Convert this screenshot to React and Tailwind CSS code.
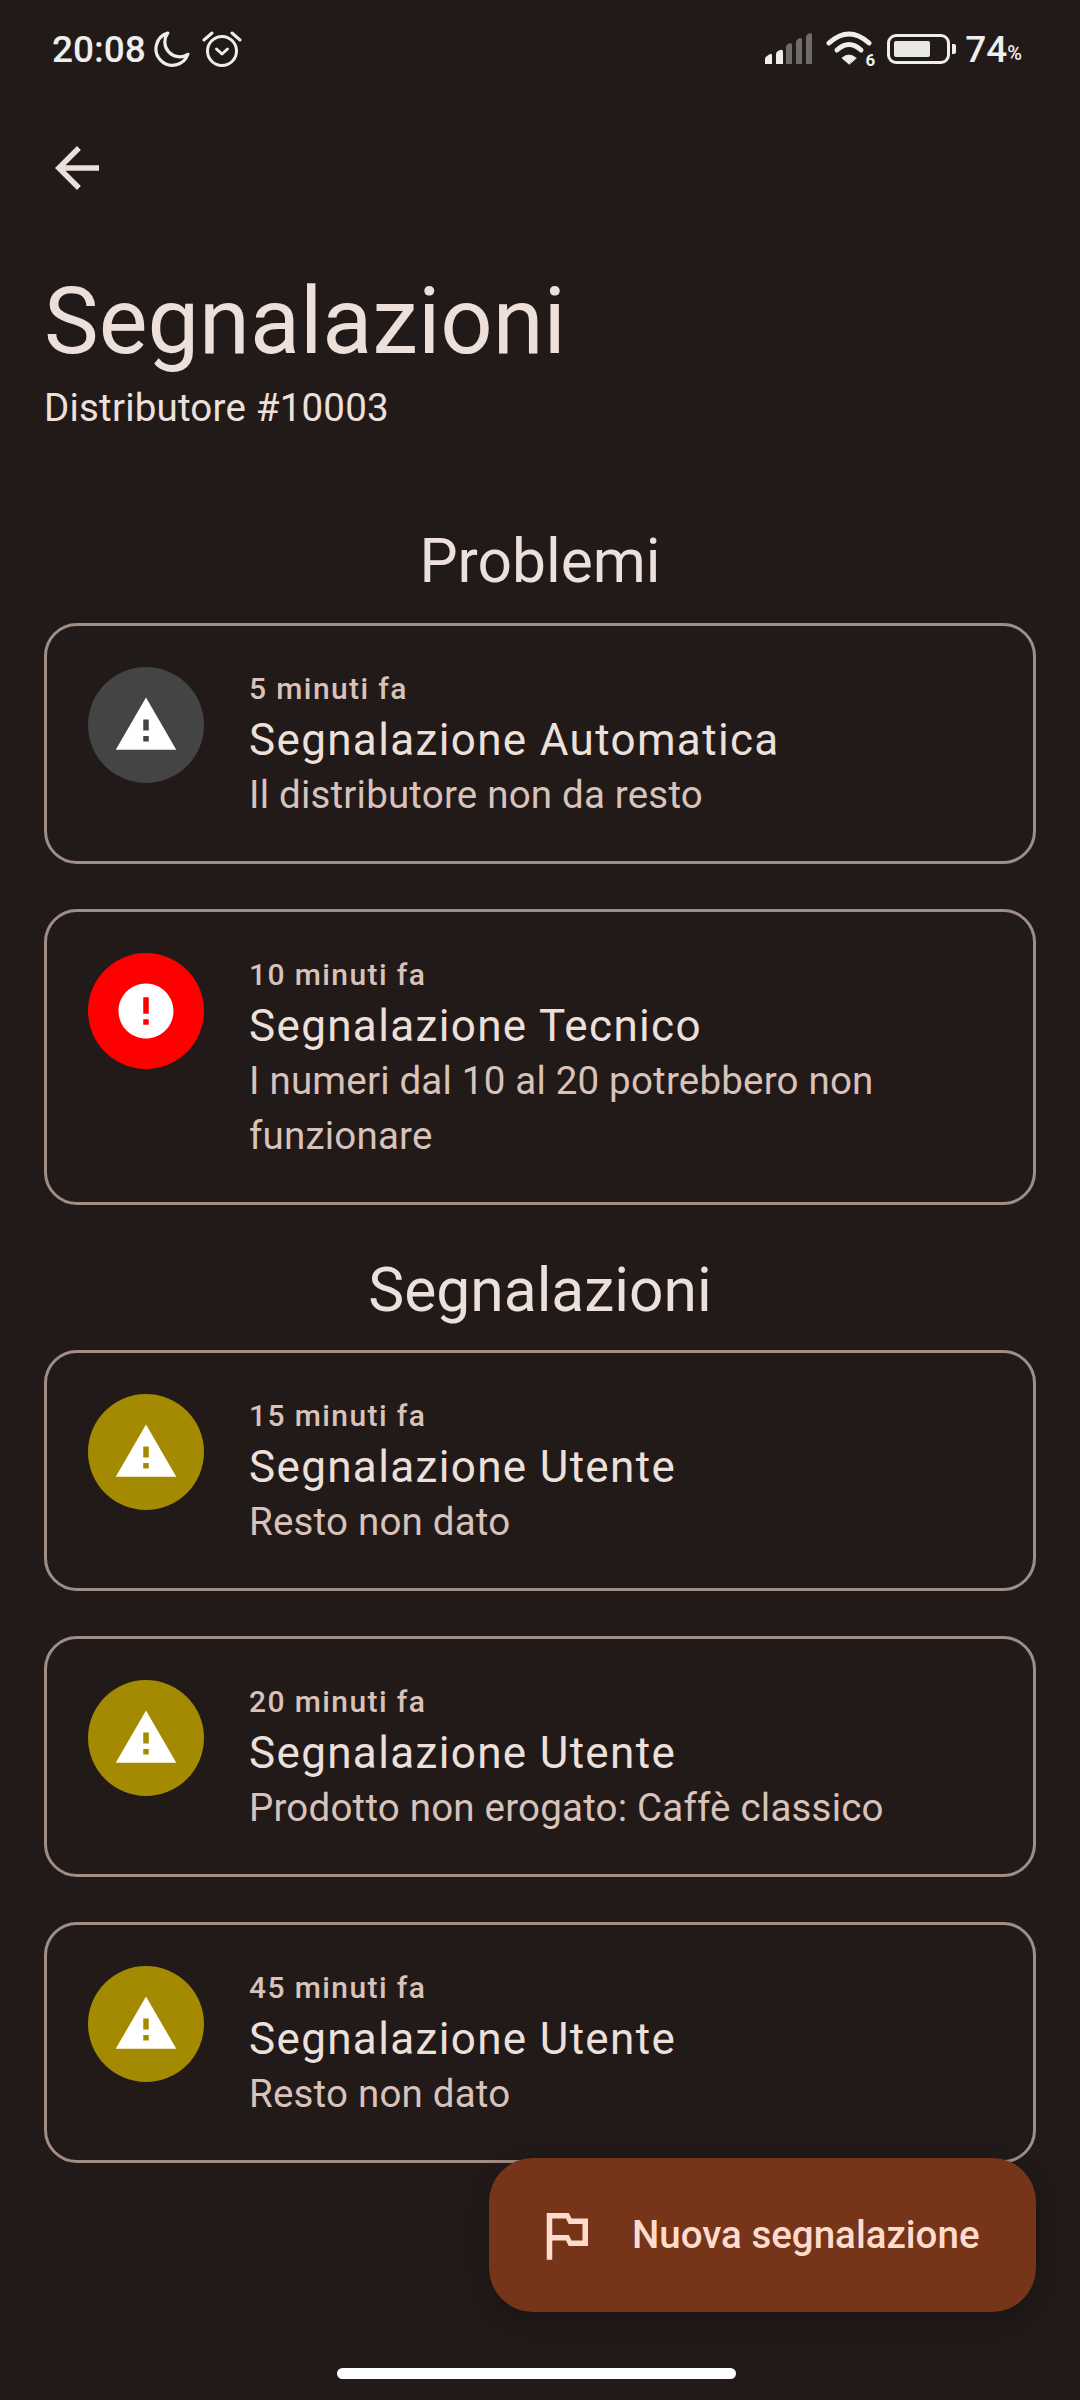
// Icon circle colours per report type
const TONES = {
  gray: "bg-[#444444]",
  red: "bg-[#ff0000]",
  yellow: "bg-[#a38a00]",
};

const problems = [
  { time: "5 minuti fa", title: "Segnalazione Automatica", text: "Il distributore non da resto", tone: "gray" },
  { time: "10 minuti fa", title: "Segnalazione Tecnico", text: "I numeri dal 10 al 20 potrebbero non funzionare", tone: "red" },
];

const reports = [
  { time: "15 minuti fa", title: "Segnalazione Utente", text: "Resto non dato", tone: "yellow" },
  { time: "20 minuti fa", title: "Segnalazione Utente", text: "Prodotto non erogato: Caffè classico", tone: "yellow" },
  { time: "45 minuti fa", title: "Segnalazione Utente", text: "Resto non dato", tone: "yellow" },
];

const StatusBar = () => (
  <div className="flex h-[96px] items-center justify-between pl-[52px] pr-[58px] pt-[2px] text-[#eeeeec]">
    <div className="flex items-center">
      <span className="text-[37px] font-medium leading-none">20:08</span>
      <svg viewBox="0 0 34 34" className="ml-[8px] h-[36px] w-[36px]" fill="none" stroke="currentColor" strokeWidth="3">
        <path d="M13 2 A15.5 15.5 0 1 0 32 22 A14 14 0 0 1 13 2 Z" strokeLinejoin="round" />
      </svg>
      <svg viewBox="0 0 40 38" className="ml-[12px] h-[38px] w-[40px]" fill="none" stroke="currentColor" strokeWidth="3" strokeLinecap="round" strokeLinejoin="round">
        <circle cx="20" cy="21" r="14.5" />
        <path d="M14.5 19 L20 24 L25.5 19" />
        <path d="M2 10 L10 3" />
        <path d="M38 10 L30 3" />
      </svg>
    </div>
    <div className="flex items-center">
      <svg viewBox="0 0 48 32" className="h-[32px] w-[48px]">
        <path d="M0 31 V26 Q0 24 2 23 L5 21 Q7 20 7 23 V31 Z" fill="#eeeeec" />
        <path d="M11 31 V21 Q11 19 13 18 L15 17 Q18 16 18 19 V31 Z" fill="#eeeeec" />
        <path d="M21 31 V14 Q21 12 23 11 L25 10 Q27 10 27 12 V31 Z" fill="#6f6b69" />
        <path d="M31 31 V9 Q31 7 33 6 L35 5 Q37 5 37 7 V31 Z" fill="#6f6b69" />
        <path d="M41 31 V4 Q41 2 43 1 L45 0 Q47 0 47 2 V31 Z" fill="#6f6b69" />
      </svg>
      <div className="relative ml-[13px] h-[36px] w-[48px]">
        <svg viewBox="0 0 48 36" className="h-[36px] w-[48px]" fill="none" stroke="currentColor" strokeLinecap="round">
          <path d="M3 12 Q23 -6 43 12" strokeWidth="5" />
          <path d="M11 19 Q23 8 35 19" strokeWidth="5" />
          <path d="M23 33 L16 27 Q23 21 30 27 Z" fill="currentColor" strokeWidth="1" />
        </svg>
        <span className="absolute bottom-[-2px] right-[-1px] text-[17px] font-bold leading-none">6</span>
      </div>
      <div className="ml-[13px] flex items-center">
        <div className="flex h-[30px] w-[63px] items-center rounded-[9px] border-[3px] border-[#eeeeec] p-[4px]">
          <div className="h-full w-[36px] rounded-[2px] bg-[#e8e8e6]" />
        </div>
        <div className="ml-[2px] h-[10px] w-[4px] rounded-r-[2px] bg-[#eeeeec]" />
      </div>
      <span className="ml-[9px] text-[37px] font-medium leading-none">74</span>
      <span className="mt-[8px] text-[20px] font-medium leading-none">%</span>
    </div>
  </div>
);

// Material "warning" triangle, or the round alert for technician reports
const ToneIcon = ({ tone }) => (
  <div className={`flex h-[116px] w-[116px] shrink-0 items-center justify-center rounded-full ${TONES[tone]}`}>
    {tone === "red" ? (
      <svg viewBox="0 0 24 24" className="h-[66px] w-[66px]">
        <path fill="#ffffff" d="M12 2C6.48 2 2 6.48 2 12s4.48 10 10 10 10-4.48 10-10S17.52 2 12 2zm1 15h-2v-2h2v2zm0-4h-2V7h2v6z" />
      </svg>
    ) : (
      <svg viewBox="0 0 24 24" className="h-[66px] w-[66px]">
        <path fill="#ffffff" d="M1 21h22L12 2 1 21zm12-3h-2v-2h2v2zm0-4h-2v-4h2v4z" />
      </svg>
    )}
  </div>
);

const ReportCard = ({ time, title, text, tone }) => (
  <div className="flex gap-[45px] rounded-[33px] border-[3px] border-[#a08d85] px-[41px] pb-[39px] pt-[41px]">
    <ToneIcon tone={tone} />
    <div className="min-w-0 flex-1">
      <div className="h-[46px] text-[30px] font-medium leading-[43px] tracking-[1.4px] text-[#d8c2ba]">{time}</div>
      <div className="h-[54px] text-[44px] leading-[54px] tracking-[1.35px] text-[#ede0db]">{title}</div>
      <div className="text-[38.5px] leading-[55px] tracking-[0.2px] text-[#d8c2ba]">{text}</div>
    </div>
  </div>
);

const App = () => {
  return (
    <div className="relative h-[2400px] w-[1080px] overflow-hidden bg-[#211a19] font-[Roboto,sans-serif]">
      <StatusBar />

      <div className="px-[44px]">
        <div className="mt-[39px] h-[66px] w-[66px]">
          <svg viewBox="0 0 24 24" className="h-[66px] w-[66px]">
            <path fill="#ede0db" d="M20 11H7.83l5.59-5.59L12 4l-8 8 8 8 1.41-1.41L7.83 13H20v-2z" />
          </svg>
        </div>

        <h1 className="mt-[63px] text-[92px] font-normal leading-[116px] text-[#ede0db]">Segnalazioni</h1>
        <p className="text-[38.5px] leading-[55px] tracking-[0.2px] text-[#ede0db]">Distributore #10003</p>

        <h2 className="mt-[83px] text-center text-[60.5px] font-normal leading-[88px] text-[#ede0db]">Problemi</h2>
        <div className="mt-[17px] flex flex-col gap-[45px]">
          {problems.map((item) => (
            <ReportCard key={item.time} {...item} />
          ))}
        </div>

        <h2 className="mt-[42px] text-center text-[60.5px] font-normal leading-[88px] text-[#ede0db]">Segnalazioni</h2>
        <div className="mt-[15px] flex flex-col gap-[45px]">
          {reports.map((item) => (
            <ReportCard key={item.time} {...item} />
          ))}
        </div>
      </div>

      {/* Floating action button */}
      <button className="absolute left-[489px] top-[2158px] flex h-[154px] w-[547px] items-center rounded-[44px] bg-[#763518] pl-[44px] text-[#ffdbce] shadow-[0_8px_24px_rgba(0,0,0,0.25)]">
        <svg viewBox="0 0 24 24" className="h-[66px] w-[66px] shrink-0">
          <path fill="currentColor" d="M14 6l-1-2H5v17h2v-7h5l1 2h7V6h-6zm4 8h-4l-1-2H7V6h5l1 2h5v6z" />
        </svg>
        <span className="ml-[33px] text-[38.5px] font-medium leading-none">Nuova segnalazione</span>
      </button>

      {/* Gesture bar */}
      <div className="absolute left-[337px] top-[2368px] h-[11px] w-[399px] rounded-full bg-white" />
    </div>
  );
};

export default App;
